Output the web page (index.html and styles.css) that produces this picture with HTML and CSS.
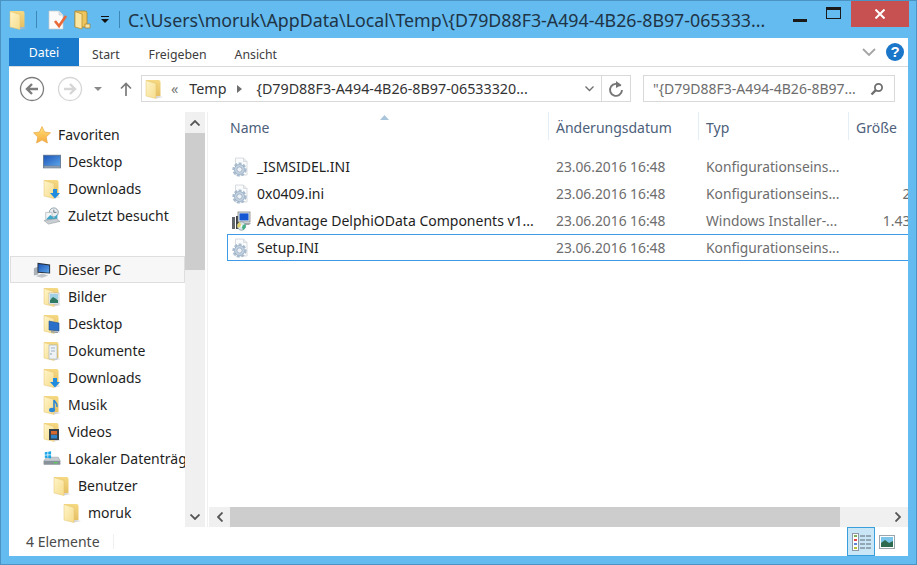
FILE: index.html
```html
<!DOCTYPE html>
<html lang="de">
  <head>
    <meta charset="UTF-8" />
    <meta name="viewport" content="width=device-width, initial-scale=1.0" />
    <title>Explorer</title>
    <link rel="stylesheet" href="styles.css">
  </head>
  <body>
    <svg class="defs" width="0" height="0">
      <defs>
        <linearGradient id="folderBack" x1="0" y1="0" x2="0" y2="1">
          <stop offset="0" stop-color="#f5d982" />
          <stop offset="1" stop-color="#e6c064" />
        </linearGradient>
        <linearGradient id="folderFront" x1="0" y1="0" x2="1" y2="1">
          <stop offset="0" stop-color="#fff5c9" />
          <stop offset="1" stop-color="#f6dc8c" />
        </linearGradient>
        <linearGradient id="screenBlue" x1="0" y1="0" x2="1" y2="1">
          <stop offset="0" stop-color="#1d56b8" />
          <stop offset="1" stop-color="#5aa3e8" />
        </linearGradient>
        <linearGradient id="starFill" x1="0" y1="0" x2="0" y2="1">
          <stop offset="0" stop-color="#ffe27a" />
          <stop offset="1" stop-color="#f6a93b" />
        </linearGradient>
        <symbol id="folder" viewBox="0 0 18 20">
          <path d="M11 16.5 L18 18 L11 19.5 Z" fill="#bdbdbd" opacity=".6" />
          <path d="M1 1 H13.5 Q15.5 1 15.5 3 V17 H1 Z" fill="url(#folderBack)" />
          <path d="M1 1.5 L11 4.5 V19.5 L1 17 Z" fill="url(#folderFront)" stroke="#e4c36d" stroke-width=".5" />
        </symbol>
        <symbol id="folderNew" viewBox="0 0 18 20">
          <path d="M2 1 H12 Q14 1 14 3 V17 H2 Z" fill="#edc55c" stroke="#a87f25" stroke-width=".7" />
          <path d="M2 1.5 L9 4 V19 L2 17 Z" fill="#fbe6a2" stroke="#b18a2f" stroke-width=".7" />
          <path d="M12 14 H17 V18 H12 Z" fill="#f6e4a8" stroke="#a87f25" stroke-width=".7" />
        </symbol>
        <symbol id="libPics" viewBox="0 0 18 20">
          <use href="#folder" width="18" height="20" />
          <rect x="6" y="6" width="10" height="11" fill="#f4f6f7" stroke="#9aa7ad" stroke-width=".5" />
          <rect x="7" y="7" width="8" height="5" fill="#9fd0e4" />
          <path d="M7 13 L10 10 L15 13 V16 H7 Z" fill="#2f7a63" />
        </symbol>
        <symbol id="libDesk" viewBox="0 0 18 20">
          <use href="#folder" width="18" height="20" />
          <path d="M6 7 L16 9 V17 L6 16 Z" fill="#2a6fc9" stroke="#26548f" stroke-width=".6" />
          <path d="M8 17 L15 18 V19 L8 18.5 Z" fill="#8e9aa6" />
        </symbol>
        <symbol id="libDocs" viewBox="0 0 18 20">
          <use href="#folder" width="18" height="20" />
          <path d="M6 4 H14 V18 H6 Z" fill="#eef2f5" stroke="#a3aeb6" stroke-width=".6" />
          <path d="M8 7 H12 M8 10 H12" stroke="#9db3c7" stroke-width="1" />
          <circle cx="8" cy="13" r=".8" fill="#7e97ad" />
        </symbol>
        <symbol id="libDown" viewBox="0 0 18 20">
          <use href="#folder" width="18" height="20" />
          <path d="M10 10 H14 V14 H17 L12 19.5 L7 14 H10 Z" fill="#1f8ce0" />
        </symbol>
        <symbol id="libMusic" viewBox="0 0 18 20">
          <use href="#folder" width="18" height="20" />
          <path d="M11 5 V14.5 M11 5 C12 8 15 8 14 12" fill="none" stroke="#2b88d6" stroke-width="1.6" />
          <ellipse cx="9" cy="15" rx="3" ry="2.2" fill="#2b88d6" />
        </symbol>
        <symbol id="libVideo" viewBox="0 0 18 20">
          <use href="#folder" width="18" height="20" />
          <rect x="6" y="7" width="10" height="11" fill="#33404a" />
          <rect x="8" y="9" width="6" height="3.5" fill="#d4692f" />
          <rect x="8" y="13" width="6" height="3.5" fill="#2d84c8" />
        </symbol>
        <symbol id="star" viewBox="0 0 18 18">
          <path d="M9 .5 L11.6 6 L17.5 6.8 L13.2 11 L14.4 17 L9 14 L3.6 17 L4.8 11 L.5 6.8 L6.4 6 Z" fill="url(#starFill)" stroke="#e8a84a" stroke-width=".7" />
        </symbol>
        <symbol id="monitor" viewBox="0 0 20 18">
          <rect x="0" y="1" width="20" height="15" fill="#6c7f95" />
          <rect x="1" y="2" width="18" height="11" fill="url(#screenBlue)" />
          <rect x="1" y="14" width="18" height="1" fill="#a9b6c4" />
        </symbol>
        <symbol id="recent" viewBox="0 0 20 20">
          <circle cx="12" cy="6" r="5" fill="#e8edf0" stroke="#8b9aa3" />
          <path d="M12 3 V6 H15" fill="none" stroke="#5d6b74" />
          <path d="M3 6 H10 V14 H3 Z" fill="#f3f5f6" stroke="#a3adb4" stroke-width=".7" />
          <path d="M4 13 L8 9 L12 12 L16 8 V14 H4 Z" fill="#3fa7c9" />
          <path d="M1 15 L15 13 L19 16 L6 19 Z" fill="#c8ced2" stroke="#8e979d" stroke-width=".6" />
        </symbol>
        <symbol id="pc" viewBox="0 0 20 18">
          <path d="M1 7 L6 5 V14 L1 15 Z" fill="#aab2b8" />
          <path d="M5 1 L19 3 V13 L5 12 Z" fill="#28303a" />
          <path d="M6 2.4 L18 4 V12 L6 11 Z" fill="url(#screenBlue)" />
          <path d="M3 16 L10 13 L17 15 L10 17.5 Z" fill="#bfc5c9" />
        </symbol>
        <symbol id="drive" viewBox="0 0 20 18">
          <path d="M1 11 L4 7 H17 L19 11 V15 H1 Z" fill="#c7ccd0" stroke="#8f979c" stroke-width=".6" />
          <rect x="1" y="11" width="18" height="4" fill="#889299" />
          <rect x="12" y="12.4" width="4" height="1.4" fill="#5cd35f" />
          <path d="M2 1.6 L5 1 V4 L2 4.4 Z M5.8 .9 L9 .4 V4 L5.8 4 Z M2 5 L5 4.7 V8 L2 7.6 Z M5.8 4.7 L9 4.7 V8.4 L5.8 8 Z" fill="#19a6e6" />
        </symbol>
        <symbol id="iniFile" viewBox="0 0 18 20">
          <path d="M4 1 H12 L15.5 4.5 V18 H4 Z" fill="#fafbfc" stroke="#cfd3d7" stroke-width=".8" />
          <path d="M12 1 V4.5 H15.5" fill="#e8eaec" stroke="#cfd3d7" stroke-width=".7" />
          <circle cx="8" cy="12.5" r="6.2" fill="none" stroke="#a8bbce" stroke-width="1.8" stroke-dasharray="3 1.6" />
          <circle cx="8" cy="12.5" r="5" fill="#c6d3e0" stroke="#8ea6bf" stroke-width=".8" />
          <circle cx="8" cy="12.5" r="2.6" fill="#eef2f6" stroke="#94abc3" stroke-width=".8" />
        </symbol>
        <symbol id="installer" viewBox="0 0 20 20">
          <rect x="0" y="6" width="3" height="12" fill="#62666a" />
          <rect x="4" y="5" width="4" height="13" fill="#3e4246" />
          <rect x="6" y="1" width="12" height="10" fill="#dfe3e7" stroke="#6d7276" stroke-width=".7" />
          <rect x="7.5" y="2.4" width="9" height="7" fill="#1557d3" />
          <path d="M9 12 H19 L17 14 H10 Z" fill="#9fa5aa" />
          <circle cx="9.5" cy="15" r="4.2" fill="#d6e6ea" stroke="#74858c" stroke-width=".6" />
          <path d="M9.5 15 L13.2 13 A4.2 4.2 0 0 1 11 19 Z" fill="#44b184" />
          <path d="M9.5 15 L5.8 17 A4.2 4.2 0 0 1 8 11 Z" fill="#e2d36b" />
          <circle cx="9.5" cy="15" r="1" fill="#fff" />
        </symbol>
      </defs>
    </svg>

    <div class="window">
      <header class="titlebar">
        <svg class="qa-folder"><use href="#folder" /></svg>
        <span class="qa-sep"></span>
        <svg class="qa-props" viewBox="0 0 20 20">
          <path d="M1 1 H11 L15 5 V19 H1 Z" fill="#fbfbfb" stroke="#c9ccd0" stroke-width=".7" />
          <path d="M11 1 V5 H15" fill="#dfe2e5" stroke="#c9ccd0" stroke-width=".7" />
          <path d="M7 11 L11 16 L18 6" fill="none" stroke="#e9693a" stroke-width="2.6" />
        </svg>
        <svg class="qa-new"><use href="#folderNew" /></svg>
        <svg class="qa-menu" viewBox="0 0 10 8">
          <rect x="1" y="0" width="8" height="1" fill="#111" />
          <path d="M1 3 H9 L5 7 Z" fill="#111" />
        </svg>
        <span class="qa-sep qa-sep-last"></span>
        <span class="title-text">C:\Users\moruk\AppData\Local\Temp\{D79D88F3-A494-4B26-8B97-065333...</span>
        <span class="win-min"></span>
        <span class="win-max"></span>
        <span class="win-close">
          <svg width="10" height="10" viewBox="0 0 10 10"><path d="M.5 .5 L9.5 9.5 M9.5 .5 L.5 9.5" stroke="#fff" stroke-width="2" /></svg>
        </span>
      </header>

      <div class="content">
        <nav class="ribbon">
          <span class="tab tab-file">Datei</span>
          <span class="tab tab-start">Start</span>
          <span class="tab tab-share">Freigeben</span>
          <span class="tab tab-view">Ansicht</span>
          <svg class="ribbon-toggle" width="14" height="8" viewBox="0 0 14 8"><path d="M1 1 L7 7 L13 1" fill="none" stroke="#a5a5a5" stroke-width="1.8" /></svg>
          <span class="help">?</span>
        </nav>

        <div class="addressbar">
          <svg class="nav-back" width="26" height="26" viewBox="0 0 26 26">
            <circle cx="13" cy="13" r="11.5" fill="#fff" stroke="#7d7d7d" stroke-width="1.3" />
            <path d="M19 13 H8 M13 8 L8 13 L13 18" fill="none" stroke="#7d7d7d" stroke-width="2.4" />
          </svg>
          <svg class="nav-fwd" width="26" height="26" viewBox="0 0 26 26">
            <circle cx="13" cy="13" r="11.5" fill="#fff" stroke="#d6d6d6" stroke-width="1.3" />
            <path d="M7 13 H18 M13 8 L18 13 L13 18" fill="none" stroke="#d6d6d6" stroke-width="2.4" />
          </svg>
          <svg class="nav-drop" width="8" height="4" viewBox="0 0 8 4"><path d="M0 0 H8 L4 4 Z" fill="#8a8a8a" /></svg>
          <svg class="nav-up" width="12" height="14" viewBox="0 0 12 14"><path d="M6 14 V2 M1 6.5 L6 1.5 L11 6.5" fill="none" stroke="#7a7a7a" stroke-width="1.7" /></svg>

          <div class="path-box">
            <svg class="path-icon"><use href="#folder" /></svg>
            <span class="path-more">«</span>
            <span class="path-part">Temp</span>
            <svg class="path-arrow" width="5" height="8" viewBox="0 0 5 8"><path d="M0 0 L5 4 L0 8 Z" fill="#6e6e6e" /></svg>
            <span class="path-long">{D79D88F3-A494-4B26-8B97-06533320...</span>
            <svg class="path-chevron" width="9" height="6" viewBox="0 0 9 6"><path d="M.5 .5 L4.5 4.5 L8.5 .5" fill="none" stroke="#6e6e6e" stroke-width="1.3" /></svg>
            <span class="path-refresh">
              <svg width="16" height="18" viewBox="0 0 16 18"><path d="M12.6 6 A6 6 0 1 0 14 10" fill="none" stroke="#757575" stroke-width="1.9" /><path d="M8 1 L13.5 5 L8 8 Z" fill="#757575" /></svg>
            </span>
          </div>

          <div class="search-box">
            <span class="search-text">"{D79D88F3-A494-4B26-8B97...</span>
            <svg width="14" height="14" viewBox="0 0 14 14"><circle cx="8.5" cy="5.5" r="3.6" fill="none" stroke="#6f6f6f" stroke-width="1.8" /><path d="M5.8 8.2 L1.5 12.5" stroke="#6f6f6f" stroke-width="2.4" /></svg>
          </div>
        </div>

        <div class="panes">
          <aside class="sidebar">
            <ul class="tree">
              <li class="lvl0"><svg class="i-star"><use href="#star" /></svg>Favoriten</li>
              <li class="lvl1"><svg><use href="#monitor" /></svg>Desktop</li>
              <li class="lvl1"><svg><use href="#libDown" /></svg>Downloads</li>
              <li class="lvl1 group-end"><svg><use href="#recent" /></svg>Zuletzt besucht</li>
              <li class="lvl0 current"><svg><use href="#pc" /></svg>Dieser PC</li>
              <li class="lvl1"><svg><use href="#libPics" /></svg>Bilder</li>
              <li class="lvl1"><svg><use href="#libDesk" /></svg>Desktop</li>
              <li class="lvl1"><svg><use href="#libDocs" /></svg>Dokumente</li>
              <li class="lvl1"><svg><use href="#libDown" /></svg>Downloads</li>
              <li class="lvl1"><svg><use href="#libMusic" /></svg>Musik</li>
              <li class="lvl1"><svg><use href="#libVideo" /></svg>Videos</li>
              <li class="lvl1"><svg><use href="#drive" /></svg>Lokaler Datenträger (C:)</li>
              <li class="lvl2"><svg><use href="#folder" /></svg>Benutzer</li>
              <li class="lvl3"><svg><use href="#folder" /></svg>moruk</li>
            </ul>
          </aside>
          <div class="vscroll">
            <span class="sb-btn sb-first"><svg width="10" height="6" viewBox="0 0 10 6"><path d="M.5 5.5 L5 1 L9.5 5.5" fill="none" stroke="#555" stroke-width="1.8" /></svg></span>
            <span class="vthumb"></span>
            <span class="sb-fill"></span>
            <span class="sb-btn"><svg width="10" height="6" viewBox="0 0 10 6"><path d="M.5 .5 L5 5 L9.5 .5" fill="none" stroke="#555" stroke-width="1.8" /></svg></span>
          </div>

          <main class="files">
            <div class="list">
              <div class="list-head">
                <svg class="sort-mark" width="9" height="5" viewBox="0 0 9 5"><path d="M0 5 L4.5 0 L9 5 Z" fill="#a9c5dc" /></svg>
                <span class="col col-name">Name</span>
                <span class="col">Änderungsdatum</span>
                <span class="col">Typ</span>
                <span class="col">Größe</span>
              </div>
              <div class="row">
                <span class="c-name"><svg><use href="#iniFile" /></svg>_ISMSIDEL.INI</span>
                <span class="c-meta">23.06.2016 16:48</span>
                <span class="c-meta">Konfigurationseins...</span>
                <span class="c-size">1 KB</span>
              </div>
              <div class="row">
                <span class="c-name"><svg><use href="#iniFile" /></svg>0x0409.ini</span>
                <span class="c-meta">23.06.2016 16:48</span>
                <span class="c-meta">Konfigurationseins...</span>
                <span class="c-size">22 KB</span>
              </div>
              <div class="row">
                <span class="c-name"><svg class="i-installer"><use href="#installer" /></svg>Advantage DelphiOData Components v1...</span>
                <span class="c-meta">23.06.2016 16:48</span>
                <span class="c-meta">Windows Installer-...</span>
                <span class="c-size">1.436 KB</span>
              </div>
              <div class="row selected">
                <span class="c-name"><svg><use href="#iniFile" /></svg>Setup.INI</span>
                <span class="c-meta">23.06.2016 16:48</span>
                <span class="c-meta">Konfigurationseins...</span>
                <span class="c-size">1 KB</span>
              </div>
            </div>
            <div class="hscroll">
              <span class="sb-btn sb-first-h"><svg width="6" height="10" viewBox="0 0 6 10"><path d="M5.5 .5 L1 5 L5.5 9.5" fill="none" stroke="#555" stroke-width="1.8" /></svg></span>
              <span class="hthumb"></span>
              <span class="sb-fill"></span>
              <span class="sb-btn"><svg width="6" height="10" viewBox="0 0 6 10"><path d="M.5 .5 L5 5 L.5 9.5" fill="none" stroke="#555" stroke-width="1.8" /></svg></span>
            </div>
          </main>
        </div>

        <footer class="statusbar">
          <span class="status-text">4 Elemente</span>
          <span class="status-sep"></span>
          <span class="view-btn active">
            <svg width="19" height="18" viewBox="0 0 19 18">
              <rect x=".5" y=".5" width="6" height="17" fill="#fff" stroke="#8d9aa6" />
              <rect x="2" y="2" width="3" height="2" fill="#7cb05a" />
              <rect x="2" y="6" width="3" height="2" fill="#e0454a" />
              <rect x="2" y="10" width="3" height="2" fill="#5a86d8" />
              <rect x="2" y="14" width="3" height="2" fill="#b9c43c" />
              <path d="M8 3 H19 M8 7 H19 M8 11 H19 M8 15 H19" stroke="#5c6873" stroke-width="1" stroke-dasharray="5 1" />
            </svg>
          </span>
          <span class="view-btn">
            <svg width="16" height="14" viewBox="0 0 16 14">
              <rect x=".5" y=".5" width="15" height="13" fill="#fff" stroke="#9aa5ae" />
              <rect x="2" y="2" width="12" height="6" fill="#7cc5ea" />
              <path d="M2 8 L6 5 L10 8 L14 6 V12 H2 Z" fill="#2d6a4f" />
            </svg>
          </span>
        </footer>
      </div>
    </div>
  </body>
</html>
```

FILE: styles.css
```css
html,
body {
  margin: 0;
  padding: 0;
}

body {
  width: 917px;
  height: 565px;
  overflow: hidden;
  font-family: "Noto Sans", sans-serif;
  font-size: 14px;
  color: #1e1e1e;
}

.defs {
  position: absolute;
}

.window {
  box-sizing: border-box;
  width: 917px;
  height: 565px;
  background-color: #63bbef;
  border: 1px solid #4b93c3;
  display: flex;
  flex-direction: column;
}

/* title bar */
.titlebar {
  height: 37px;
  display: flex;
  align-items: center;
  flex-shrink: 0;
}

.qa-folder {
  width: 18px;
  height: 20px;
  margin-left: 8px;
}

.qa-sep {
  width: 1px;
  height: 17px;
  background-color: #3d86b8;
  margin-left: 9px;
}

.qa-props {
  width: 20px;
  height: 20px;
  margin-left: 11px;
}

.qa-new {
  width: 18px;
  height: 20px;
  margin-left: 5px;
}

.qa-menu {
  width: 10px;
  height: 8px;
  margin-left: 9px;
}

.qa-sep-last {
  margin-left: 9px;
}

.title-text {
  margin-left: 8px;
  width: 655px;
  font-size: 17.8px;
  white-space: nowrap;
  color: #1f3446;
}

.win-min {
  width: 14px;
  height: 3px;
  margin-left: 10px;
  margin-top: 1px;
  background-color: #1a1a1a;
}

.win-max {
  box-sizing: border-box;
  width: 15px;
  height: 12px;
  margin-left: 19px;
  margin-top: -14px;
  border: 1px solid #1a1a1a;
  border-top-width: 3px;
}

.win-close {
  width: 58px;
  height: 26px;
  margin-left: 10px;
  align-self: flex-start;
  background-color: #c75050;
  display: flex;
  align-items: center;
  justify-content: center;
}

/* white client area */
.content {
  flex: 1;
  margin: 0 8px 8px 8px;
  background-color: #fff;
  display: flex;
  flex-direction: column;
  min-height: 0;
}

.ribbon {
  height: 28px;
  border-bottom: 1px solid #dadbdc;
  display: flex;
  align-items: center;
  font-size: 12.3px;
  color: #3d3d3d;
  flex-shrink: 0;
}

.tab {
  height: 28px;
  line-height: 33px;
  align-self: flex-start;
}

.tab-file {
  width: 70px;
  line-height: 29px;
  text-align: center;
  background-color: #1979ca;
  color: #fff;
}

.tab-start {
  margin-left: 13px;
}

.tab-share {
  margin-left: 29px;
}

.tab-view {
  margin-left: 28px;
}

.ribbon-toggle {
  margin-left: auto;
}

.help {
  width: 18px;
  height: 18px;
  margin: 0 4px 0 10px;
  border-radius: 50%;
  background-color: #1a76c9;
  color: #fff;
  font-family: "Liberation Sans", sans-serif;
  font-weight: bold;
  font-size: 15px;
  line-height: 18px;
  text-align: center;
}

/* address row */
.addressbar {
  box-sizing: border-box;
  height: 45px;
  padding-bottom: 2px;
  display: flex;
  align-items: center;
  flex-shrink: 0;
  color: #333;
}

.nav-back {
  margin-left: 10px;
}

.nav-fwd {
  margin-left: 12px;
}

.nav-drop {
  margin-left: 11px;
}

.nav-up {
  margin-left: 18px;
}

.path-box {
  box-sizing: border-box;
  width: 490px;
  height: 27px;
  margin-left: 9px;
  border: 1px solid #d9d9d9;
  display: flex;
  align-items: center;
  font-size: 14.3px;
}

.path-box svg {
  flex-shrink: 0;
}

.path-icon {
  width: 18px;
  height: 20px;
  margin-left: 3px;
}

.path-more {
  margin-left: 8px;
  color: #777;
}

.path-part {
  margin-left: 11px;
}

.path-arrow {
  margin-left: 11px;
}

.path-long {
  margin-left: 14px;
  white-space: nowrap;
}

.path-chevron {
  margin-left: auto;
  margin-right: 7px;
}

.path-refresh {
  box-sizing: border-box;
  width: 29px;
  height: 25px;
  border-left: 1px solid #d9d9d9;
  display: flex;
  align-items: center;
  justify-content: center;
}

.search-box {
  box-sizing: border-box;
  width: 252px;
  height: 27px;
  margin-left: 12px;
  padding: 0 10px 0 9px;
  border: 1px solid #d9d9d9;
  display: flex;
  align-items: center;
  justify-content: space-between;
  color: #6d6d6d;
  white-space: nowrap;
}

/* panes */
.panes {
  flex: 1;
  display: flex;
  min-height: 0;
}

.sidebar {
  width: 176px;
  overflow: hidden;
  flex-shrink: 0;
}

.tree {
  list-style: none;
  margin: 0;
  padding: 9px 0 0 0;
}

.tree li {
  box-sizing: border-box;
  height: 27px;
  display: flex;
  align-items: center;
  white-space: nowrap;
}

.tree svg {
  width: 18px;
  height: 20px;
  flex-shrink: 0;
  margin-right: 7px;
}

.lvl0 {
  padding-left: 24px;
}

.lvl1 {
  padding-left: 34px;
}

.lvl2 {
  padding-left: 44px;
}

.lvl3 {
  padding-left: 54px;
}

.tree .group-end {
  margin-bottom: 27px;
}

.tree .current {
  margin-left: 1px;
  padding-left: 22px;
  background-color: #f7f7f7;
  border: 1px solid #dedede;
}

.vscroll {
  width: 20px;
  display: flex;
  flex-direction: column;
  flex-shrink: 0;
  background-color: #f0f0f0;
}

.sb-btn {
  width: 20px;
  height: 20px;
  flex-shrink: 0;
  display: flex;
  align-items: center;
  justify-content: center;
  background-color: #f0f0f0;
}

.sb-first {
  height: 21px;
}

.sb-first-h {
  width: 21px;
}

.vthumb {
  height: 137px;
  flex-shrink: 0;
  background-color: #cdcdcd;
}

.sb-fill {
  flex: 1;
}

.files {
  flex: 1;
  min-width: 0;
  margin-left: 2px;
  border-left: 1px solid #f0f0f0;
  display: flex;
  flex-direction: column;
}

.list {
  flex: 1;
  overflow: hidden;
  padding-left: 19px;
  position: relative;
  color: #6d6d6d;
}

.list-head {
  height: 41px;
  display: flex;
  align-items: flex-start;
  color: #4c607a;
}

.sort-mark {
  position: absolute;
  left: 172px;
  top: 3px;
}

.col {
  box-sizing: border-box;
  width: 150px;
  height: 28px;
  flex-shrink: 0;
  padding-left: 7px;
  line-height: 32px;
  border-left: 1px solid #e3eef7;
  white-space: nowrap;
}

.col-name {
  width: 321px;
  padding-left: 3px;
  border-left: none;
}

.row {
  box-sizing: border-box;
  width: 722px;
  height: 27px;
  display: flex;
  align-items: center;
  white-space: nowrap;
}

.row.selected {
  border: 1px solid #3f9ae8;
  border-right: none;
}

.row.selected .c-name {
  width: 321px;
  padding-left: 3px;
}

.c-name {
  box-sizing: border-box;
  width: 322px;
  padding-left: 4px;
  display: flex;
  align-items: center;
  color: #1e1e1e;
}

.c-name svg {
  width: 19px;
  height: 20px;
  margin-right: 7px;
  flex-shrink: 0;
}

.c-name .i-installer {
  width: 20px;
  margin-left: 1px;
  margin-right: 5px;
}

.c-meta {
  box-sizing: border-box;
  width: 150px;
  padding-left: 7px;
  font-size: 13.8px;
}

.c-size {
  width: 91px;
  text-align: right;
}

.hscroll {
  height: 20px;
  display: flex;
  flex-shrink: 0;
  background-color: #f0f0f0;
  margin-left: 1px;
}

.hthumb {
  width: 610px;
  flex-shrink: 0;
  background-color: #cdcdcd;
}

.statusbar {
  height: 29px;
  display: flex;
  align-items: center;
  flex-shrink: 0;
  color: #4a4a4a;
}

.status-text {
  margin-left: 17px;
}

.status-sep {
  width: 1px;
  height: 15px;
  margin-left: 13px;
  background-color: #f0f0f0;
}

.view-btn {
  box-sizing: border-box;
  width: 28px;
  height: 29px;
  display: flex;
  align-items: center;
  justify-content: center;
}

.view-btn.active {
  margin-left: auto;
  background-color: #c9e6f7;
  border: 1px solid #3a9fdd;
}

.view-btn:last-child {
  width: 20px;
  margin-left: 2px;
  margin-right: 11px;
}
```
